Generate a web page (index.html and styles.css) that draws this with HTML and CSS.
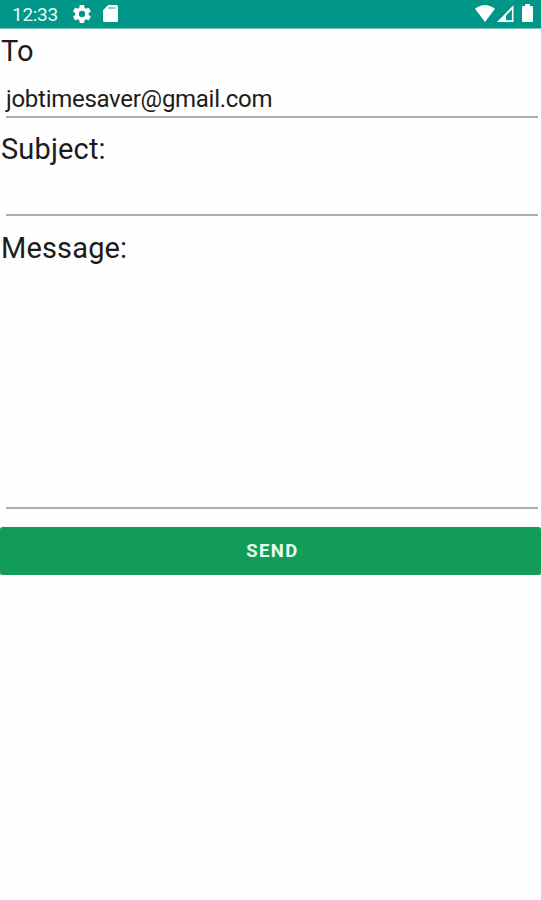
FILE: index.html
```html
<!DOCTYPE html>
<html lang="en">
<head>
<meta charset="utf-8">
<title>Send message</title>
<link rel="stylesheet" href="styles.css">
</head>
<body>
<header class="status-bar">
  <span class="clock">12:33</span>
  <svg class="gear" width="18" height="18" viewBox="2 2 20 20"><path fill="#fff" fill-rule="evenodd" d="M19.4 13a7.8 7.8 0 0 0 0-2l2.1-1.6c.2-.2.3-.4.1-.7l-2-3.400c-.1-.2-.4-.3-.6-.2l-2.500 1a7.300 7.300 0 0 0-1.700-1l-.4-2.600c0-.3-.2-.5-.5-.5h-4c-.3 0-.5.2-.5.5L9 5.100a8 8 0 0 0-1.700 1l-2.500-1c-.2-.1-.5 0-.6.2l-2 3.400c-.1.3-.1.500.1.700L4.500 11a7.800 7.800 0 0 0 0 2l-2.200 1.600c-.2.2-.2.4-.1.7l2 3.400c.1.2.4.3.6.2l2.500-1a7.300 7.300 0 0 0 1.700 1l.4 2.600c0 .3.2.5.5.5h4c.3 0 .5-.2.5-.5l.4-2.600a8 8 0 0 0 1.700-1l2.500 1c.2.100.5 0 .6-.2l2-3.400c.1-.3.1-.500-.1-.7zM12 15.500a3.500 3.500 0 1 1 0-7 3.500 3.500 0 0 1 0 7z"/></svg>
  <svg class="card" width="15" height="17" viewBox="0 0 15 17"><path fill="#fff" d="M5.200 0H13.500Q15 0 15 1.500V15.500Q15 17 13.500 17H1.500Q0 17 0 15.500V5.200z"/><path stroke="#009688" stroke-opacity=".45" stroke-width="2" d="M5 3h7.500"/></svg>
  <span class="spacer"></span>
  <svg class="wifi" width="20" height="17" viewBox="0 0 20 17"><path fill="#fff" d="M0 3.800Q10-3.800 20 3.800L10 17z"/></svg>
  <svg class="signal" width="17" height="17" viewBox="0 0 17 17"><path fill="#fff" fill-rule="evenodd" d="M16.500.3V17H0zM14.900 4.500L9 10.400V15.200H14.900z"/></svg>
  <svg class="battery" width="11" height="18" viewBox="0 0 11 18"><path fill="#fff" d="M3.200 0h4.600v2H10q1 0 1 1v14q0 1-1 1H1q-1 0-1-1V3q0-1 1-1h2.200z"/></svg>
</header>
<main class="form">
  <div class="label">To</div>
  <div class="field email">jobtimesaver@gmail.com</div>
  <div class="label">Subject:</div>
  <div class="field subject"></div>
  <div class="label">Message:</div>
  <div class="field message"></div>
  <button class="send" type="button">SEND</button>
</main>
</body>
</html>
```
FILE: styles.css
```css
* { box-sizing: border-box; }
body {
  margin: 0;
  background: #fefefe;
  color: #1c1c1c;
  font-family: Roboto, sans-serif;
}
.status-bar {
  height: 29px;
  display: flex;
  align-items: flex-start;
  padding: 0 8px 0 12px;
  background: #009688;
  border-bottom: 1px solid #78c5bd;
  color: #e9fbf8;
}
.clock { width: 61px; padding-top: 1px; font-size: 19px; line-height: 28px; letter-spacing: -0.3px; }
.gear { margin-top: 5px; }
.card { margin: 5px 0 0 12px; }
.spacer { flex: 1; }
.wifi { margin-top: 5px; }
.signal { margin: 5px 0 0 2px; }
.battery { margin: 4px 0 0 8px; }
.form { display: flex; flex-direction: column; padding-top: 1px; }
.label {
  height: 43px;
  padding-left: 1px;
  font-size: 29px;
  line-height: 43px;
  letter-spacing: 0.15px;
}
.field {
  height: 45px;
  margin: 0 3px 10px 6px;
  border-bottom: 2px solid #acacac;
}
.email {
  font-size: 24px;
  line-height: 53px;
  letter-spacing: -0.28px;
}
.subject { margin-bottom: 11px; }
.message { height: 239px; margin-bottom: 18px; }
.send {
  height: 48px;
  padding: 0;
  border: 0;
  border-radius: 3px;
  background: #119d59;
  box-shadow: 0 1px 2px #0006;
  color: #e8fbef;
  font: 700 18.5px/49px Roboto, sans-serif;
  letter-spacing: 1.4px;
  text-indent: 4px;
}
```
